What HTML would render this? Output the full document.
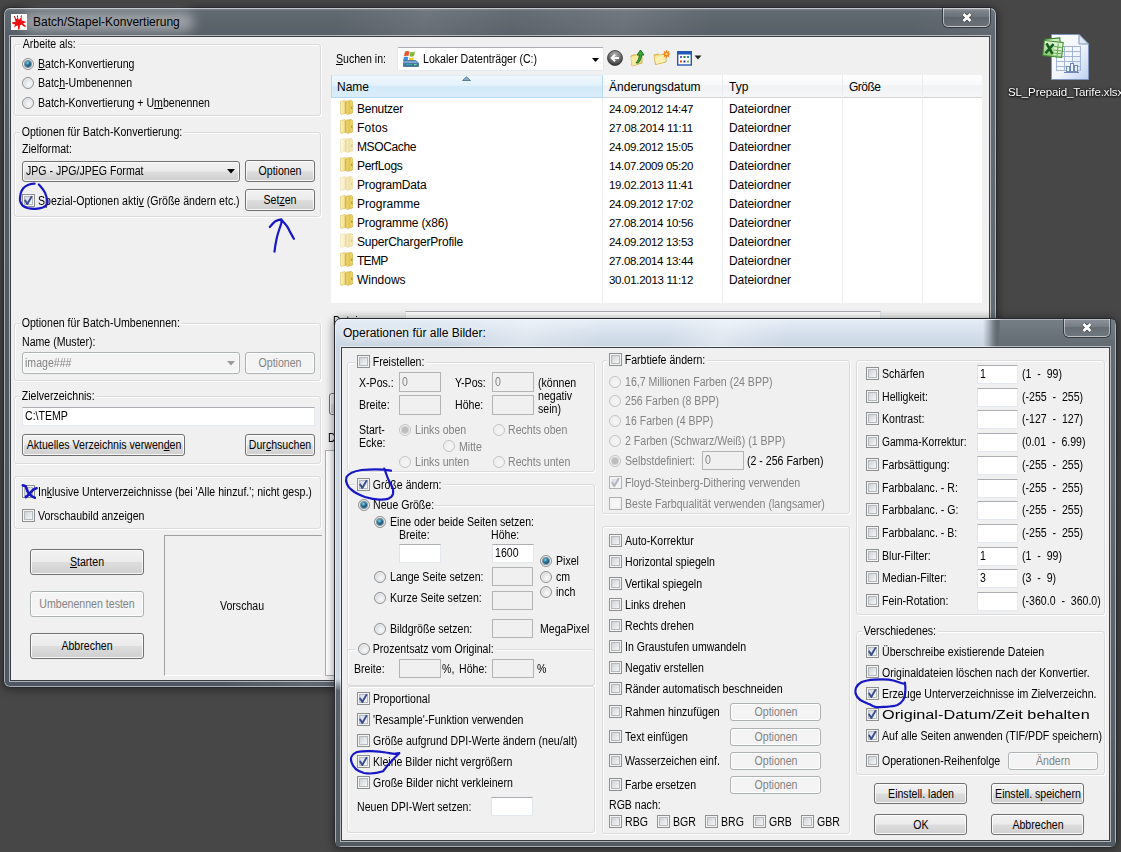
<!DOCTYPE html>
<html lang="de"><head><meta charset="utf-8"><title>Batch/Stapel-Konvertierung</title>
<style>
html,body{margin:0;padding:0}
body{width:1121px;height:852px;overflow:hidden;background:#474747;position:relative;font-family:"Liberation Sans",sans-serif;font-size:12.300px;color:#000}
div,span{box-sizing:border-box}
.a{position:absolute}
.t{position:absolute;white-space:pre;line-height:14px;height:14px;transform-origin:0 50%;transform:scaleX(.86)}
.g{color:#838383}
.s{position:absolute;white-space:nowrap;line-height:16px;height:16px;font-size:12px;letter-spacing:0.1px}
.win{position:absolute;border-radius:7px;border:1px solid #26292d;box-shadow:inset 0 0 0 1px rgba(255,255,255,.5),0 1px 9px 1px rgba(0,0,0,.4)}
.cl{position:absolute;background:#f0f0f0;border:1px solid #3a3f45;box-shadow:0 0 0 1px rgba(255,255,255,.55)}
.gb{position:absolute;border:1px solid #dbdbdb;border-radius:3px;box-shadow:inset 1px 1px 0 #fff,1px 1px 0 #fff}
.gl{position:absolute;background:#f0f0f0;height:14px;line-height:14px;white-space:nowrap;padding:0 2px;transform-origin:0 50%;transform:scaleX(.86)}
.cb{position:absolute;width:13px;height:13px;border:1px solid #8e8f8f;background:#f4f4f4;box-shadow:inset 0 0 0 1px #f4f4f4,inset 0 0 0 2px #b4b9be}
.cb i{position:absolute;left:2px;top:2px;width:7px;height:7px;background:linear-gradient(135deg,#cfd2d6,#f6f6f6)}
.cb.d{border-color:#b1b1b1;background:#f7f7f7;box-shadow:inset 0 0 0 2px #f3f3f3}
.cb.d i{background:#f7f7f7}
.cb.on:after{content:"";position:absolute;left:0;top:0;width:11px;height:11px;background:#3d4f8c;clip-path:polygon(1px 5.600px,2.400px 4.300px,4.300px 7px,8px .800px,9.700px 1.400px,4.900px 9.900px,3.800px 9.900px)}
.cb.on i{background:linear-gradient(135deg,#d5daea,#f4f6fb)}
.cb.d.on:after{background:#b4b4b4}
.rb{position:absolute;width:12px;height:12px;border-radius:50%;border:1px solid #8e8f8f;background:radial-gradient(circle at 60% 60%,#fafafa 0,#e3e5e8 45%,#c3c7cc 100%);box-shadow:inset 0 0 0 1px #f2f2f2}
.rb.d{border-color:#c4c4c4;background:radial-gradient(circle at 60% 60%,#f6f6f6 0,#e9e9e9 100%)}
.rb.on:after{content:"";position:absolute;left:2px;top:2px;width:6px;height:6px;border-radius:50%;background:radial-gradient(circle at 40% 32%,#86d3ee 0,#1f6f92 42%,#0b2f45 100%);box-shadow:0 0 0 1px rgba(50,90,115,.6)}
.rb.d.on:after{background:#bdbdbd;box-shadow:0 0 0 1px #cfcfcf}
.bt{position:absolute;border:1px solid #707070;border-radius:3px;background:linear-gradient(#f2f2f2 0,#ebebeb 48%,#dddddd 52%,#cfcfcf 100%);box-shadow:inset 0 0 0 1px rgba(255,255,255,.85);text-align:center;white-space:nowrap}
.x{position:absolute;left:50%;top:0;transform:translateX(-50%) scaleX(.86)}
.xl{display:inline-block;transform-origin:0 50%;transform:scaleX(.86)}
.bt.d{border-color:#adb2b5;background:#f4f4f4;color:#838383}
.bt.def{border-color:#3c7fb1;box-shadow:inset 0 0 0 1px #46d8fb}
.fd{position:absolute;background:#fff;border:1px solid #e3e9ef;border-top-color:#abadb3;border-left-color:#e2e3ea;white-space:nowrap;padding-left:2px}
.fd.d{background:#f0f0f0;border:1px solid #b4b4b4;color:#838383}
u{text-decoration:underline;text-underline-offset:1px}
</style></head>
<body>
<svg class="a" style="left:1040px;top:32px" width="52" height="50" viewBox="0 0 52 50">
<defs><linearGradient id="pg" x1="0" y1="0" x2="1" y2="1"><stop offset="0" stop-color="#ffffff"/><stop offset=".55" stop-color="#f1f5fd"/><stop offset="1" stop-color="#bccff0"/></linearGradient>
<linearGradient id="xg" x1="0" y1="0" x2="0" y2="1"><stop offset="0" stop-color="#e2f2d6"/><stop offset="1" stop-color="#86c56b"/></linearGradient></defs>
<path d="M11.500 2.500H39l9.500 9.500V47.500H11.500Z" fill="url(#pg)" stroke="#7f95bb"/>
<path d="M39 2.500V12h9.500Z" fill="#dfe8f8" stroke="#7f95bb" stroke-linejoin="round"/>
<g stroke="#a3b5d6" stroke-width="1" fill="none"><path d="M16 14.500H40M16 19.500H40M16 24.500H40M16 29.500H40M16 34.500H40M16 38.500H40M16.500 14V39M24.500 14V39M32.500 14V39M40.500 14V39"/></g>
<g fill="#ecf1fb" stroke="#6f88b5" stroke-width="1"><rect x="26.500" y="34.500" width="3" height="5"/><rect x="30.500" y="31.500" width="3" height="8"/><rect x="34.500" y="33.500" width="3" height="6"/></g><path d="M24 40.500h15" stroke="#6f88b5"/>
<rect x="5.500" y="6.500" width="15" height="15" fill="#cfe8bf" stroke="#2f7d25" transform="rotate(-5 13 14)"/>
<rect x="3.500" y="9.500" width="19" height="15" fill="url(#xg)" stroke="#3a8a2c" transform="rotate(6 13 17)"/>
<g transform="rotate(6 13 17)"><rect x="14" y="11" width="7.500" height="12" fill="#e4f3da" opacity=".9"/><path d="M14 14.500h7.500M14 18h7.500M14 21h7.500M17.700 11v12" stroke="#5aa848" stroke-width="1"/>
<path d="M6 12l7 10M13 12l-7 10" stroke="#145c1c" stroke-width="2.600"/></g>
</svg>
<div class="s" style="left:1008px;top:84px;color:#fff;text-shadow:0 1px 2px #000,0 0 3px #000;font-size:11.500px;letter-spacing:-0.12px;transform:scaleX(1.001);transform-origin:0 0">SL_Prepaid_Tarife.xlsx</div>
<div class="win" style="left:3px;top:7px;width:994px;height:681px;background:linear-gradient(100deg,rgba(255,255,255,0) 30%,rgba(255,255,255,.09) 38%,rgba(255,255,255,.02) 46%,rgba(255,255,255,.1) 56%,rgba(255,255,255,0) 64%,rgba(255,255,255,0) 82%,rgba(255,255,255,.12) 97%),linear-gradient(#8a929a 0,#616971 3px,#565e67 28px,#525b64 300px,#4f5862 100%)"></div>
<div class="a" style="left:22px;top:12px;width:172px;height:20px;border-radius:10px;background:rgba(255,255,255,.4);filter:blur(6px)"></div>
<svg class="a" style="left:11px;top:14px" width="16" height="16" viewBox="0 0 16 16"><rect width="16" height="16" fill="#fff"/>
<path d="M3 2.500L5.500 5L6.800 3.500L8 6L10.500 2.500L10.800 6.500L15.500 8L12 9.500L15.500 12.500L13 12.800L10.500 10.500L9 11.500L8.500 15.500L7 15.500L7 11.500L5 12L3 13.500L4 10.500L1 9.500L1.500 8L4.500 8L4 5.500Z" fill="#f01212"/><path d="M3 2l1.500 1.500M6.500 1.500v2M10.500 1.500l-.500 1.500" stroke="#8a1010" stroke-width="1"/></svg>
<div class="s" style="left:33px;top:14px;letter-spacing:0">Batch/Stapel-Konvertierung</div>
<div class="a" style="left:943px;top:8px;width:47px;height:19px;border:1px solid rgba(255,255,255,.55);border-top:0;border-radius:0 0 5px 5px;background:linear-gradient(rgba(255,255,255,.18),rgba(255,255,255,.04) 50%,rgba(0,0,0,.06) 50%,rgba(255,255,255,.05));box-shadow:0 0 0 1px rgba(30,34,38,.7)"></div>
<svg class="a" style="left:961px;top:12px" width="12" height="11" viewBox="0 0 12 11"><path d="M2.500 1.900L9.500 9.100M9.500 1.900L2.500 9.100" stroke="#3b4046" stroke-width="4.200"/><path d="M2.500 1.900L9.500 9.100M9.500 1.900L2.500 9.100" stroke="#fff" stroke-width="2.800"/></svg>
<div class="cl" style="left:10px;top:36px;width:980px;height:645px"></div>
<div class="gb" style="left:14px;top:44px;width:307px;height:72px"></div>
<div class="gl " style="left:21px;top:37px">Arbeite als:</div>
<div class="rb on" style="left:22px;top:58px"></div>
<div class="t " style="left:38px;top:57px"><u>B</u>atch-Konvertierung</div>
<div class="rb" style="left:22px;top:77px"></div>
<div class="t " style="left:38px;top:76px">Batc<u>h</u>-Umbenennen</div>
<div class="rb" style="left:22px;top:97px"></div>
<div class="t " style="left:38px;top:96px">Batch-Konvertierung + U<u>m</u>benennen</div>
<div class="gb" style="left:14px;top:132px;width:307px;height:85px"></div>
<div class="gl " style="left:20px;top:125px">Optionen für Batch-Konvertierung:</div>
<div class="t " style="left:22px;top:142px">Zielformat:</div>
<div class="bt" style="left:22px;top:161px;width:218px;height:21px;line-height:19px;text-align:left;padding-left:3px"><span class="xl">JPG - JPG/JPEG Format</span></div>
<svg class="a" style="left:227px;top:169px" width="8" height="5"><path d="M0 0h8L4 4.500Z" fill="#000"/></svg>
<div class="bt" style="left:245px;top:160px;width:70px;height:22px;line-height:20px"><span class="x">Optionen</span></div>
<div class="cb on" style="left:22px;top:194px"><i></i></div>
<div class="t " style="left:38px;top:194px">Spezial-Optionen akti<u>v</u> (Größe ändern etc.)</div>
<div class="bt" style="left:245px;top:189px;width:70px;height:22px;line-height:20px"><span class="x">Set<u>z</u>en</span></div>
<div class="gb" style="left:14px;top:323px;width:307px;height:58px"></div>
<div class="gl " style="left:20px;top:316px">Optionen für Batch-Umbenennen:</div>
<div class="t " style="left:22px;top:335px">Name (Muster):</div>
<div class="bt d" style="left:22px;top:352px;width:218px;height:22px;line-height:20px;text-align:left;padding-left:2px"><span class="xl">image###</span></div>
<svg class="a" style="left:227px;top:361px" width="8" height="5"><path d="M0 0h8L4 4.500Z" fill="#9a9a9a"/></svg>
<div class="bt d" style="left:245px;top:352px;width:70px;height:22px;line-height:20px"><span class="x">Optionen</span></div>
<div class="gb" style="left:14px;top:396px;width:307px;height:68px"></div>
<div class="gl " style="left:20px;top:389px">Zielverzeichnis:</div>
<div class="fd" style="left:22px;top:407px;width:293px;height:19px;line-height:17px"><span class="xl">C:\TEMP</span></div>
<div class="bt" style="left:22px;top:434px;width:163px;height:22px;line-height:20px"><span class="x">Aktuelles Verzeichnis verwen<u>d</u>en</span></div>
<div class="bt" style="left:245px;top:434px;width:70px;height:22px;line-height:20px"><span class="x">Dur<u>c</u>hsuchen</span></div>
<div class="gb" style="left:14px;top:476px;width:307px;height:53px"></div>
<div class="cb" style="left:22px;top:485px"><i></i></div>
<div class="t " style="left:38px;top:485px">In<u>k</u>lusive Unterverzeichnisse (bei 'Alle hinzuf.'; nicht gesp.)</div>
<div class="cb" style="left:22px;top:509px"><i></i></div>
<div class="t " style="left:38px;top:509px">Vorschaubild anzei<u>g</u>en</div>
<div class="bt" style="left:30px;top:549px;width:114px;height:26px;line-height:24px"><span class="x"><u>S</u>tarten</span></div>
<div class="bt d" style="left:30px;top:591px;width:114px;height:26px;line-height:24px"><span class="x">Umbenennen testen</span></div>
<div class="bt" style="left:30px;top:633px;width:114px;height:26px;line-height:24px"><span class="x">Abbrechen</span></div>
<div class="a" style="left:164px;top:535px;width:158px;height:141px;border:1px solid #a0a0a0;border-right:0;border-bottom-color:#fff"></div>
<div class="t " style="left:220px;top:599px">Vorschau</div>
<div class="t " style="left:336px;top:52px"><u>S</u>uchen in:</div>
<div class="a" style="left:397px;top:47px;width:207px;height:24px;background:#fff;border:1px solid #e3e9ef;border-top-color:#abadb3;border-radius:2px"></div>
<svg class="a" style="left:403px;top:50px" width="16" height="17" viewBox="0 0 16 17">
<path d="M2 1.500c2-1 3-.5 4.500 0L5.500 6C4 5.500 3 5.500 1 6.300Z" fill="#e8542c"/><path d="M7.500 1.800c1.500.7 3 .6 4.500-.3L11 6c-1.500.9-3 .9-4.500.3Z" fill="#7cb83a"/>
<path d="M.8 7.300c2-.8 3-.6 4.500-.1L4.500 11C3 10.500 2 10.500 0 11.300Z" fill="#3a8edb"/><path d="M6.300 7.500c1.500.6 3 .6 4.500-.3L10 11c-1.500.9-3 .9-4.500.3Z" fill="#f4c430"/>
<path d="M1.500 10.500h11l3 2.500v3.500H.5V13Z" fill="#7aa6d2" stroke="#3c6590" stroke-width=".8"/><rect x="1.200" y="13.300" width="13.600" height="2.600" fill="#2f6a8f"/><rect x="2.500" y="14" width="7" height="1.200" fill="#3f9fb0"/><rect x="11" y="14" width="2.500" height="1.200" fill="#7fe07a"/></svg>
<div class="t " style="left:423px;top:52px">Lokaler Datenträger (C:)</div>
<svg class="a" style="left:592px;top:58px" width="8" height="5"><path d="M0 0h7L3.500 4Z" fill="#000"/></svg>
<svg class="a" style="left:607px;top:50px" width="16" height="16" viewBox="0 0 16 16"><defs><radialGradient id="bk" cx=".5" cy=".3" r=".7"><stop offset="0" stop-color="#b9b9b9"/><stop offset=".6" stop-color="#6b6b6b"/><stop offset="1" stop-color="#2e2e2e"/></radialGradient></defs>
<circle cx="8" cy="8" r="7.500" fill="url(#bk)" stroke="#3a3a3a" stroke-width=".8"/><path d="M12 8H5M8 4.800L4.800 8 8 11.200" stroke="#fff" stroke-width="2" fill="none"/></svg>
<svg class="a" style="left:630px;top:49px" width="17" height="18" viewBox="0 0 17 18"><path d="M1 7l4-1.500 2 1 5-1.500v9l-10 3Z" fill="#f3d873" stroke="#c9a43a" stroke-width=".8"/><path d="M1 8l7-2v9l-6 2Z" fill="#f9e9a0"/>
<path d="M6 14c2-2 3-5 3.500-8H7L10.500 1 14 6h-2.300c-.4 3.500-1.500 6-3.500 8Z" fill="#35a839" stroke="#1a6b22" stroke-width=".9"/></svg>
<svg class="a" style="left:653px;top:50px" width="18" height="16" viewBox="0 0 18 16"><path d="M1 5l4-1 1.500 1.200L13 4v8L2.500 14.500Z" fill="#f3d873" stroke="#c9a43a" stroke-width=".8"/><path d="M1.500 6.500l11-2.200v7.500L3 14Z" fill="#fbeeb0"/>
<circle cx="13.500" cy="4" r="2.600" fill="#f59a23"/><path d="M13.500 .3v7.400M9.800 4h7.400M10.900 1.400l5.200 5.200M16.100 1.400l-5.200 5.200" stroke="#f07c12" stroke-width="1.100"/><circle cx="13.500" cy="4" r="1.300" fill="#ffd27a"/></svg>
<svg class="a" style="left:677px;top:51px" width="26" height="15" viewBox="0 0 26 15"><rect x=".7" y=".7" width="13.600" height="13.300" fill="#fff" stroke="#2458b5" stroke-width="1.400"/><rect x="1" y="1" width="13" height="2.500" fill="#2458b5"/>
<rect x="3" y="5" width="2" height="2" fill="#6a5acd"/><rect x="6.500" y="5" width="2" height="2" fill="#2e7d32"/><rect x="10" y="5" width="2" height="2" fill="#1e88e5"/>
<rect x="3" y="9.500" width="2" height="2" fill="#e65100"/><rect x="6.500" y="9.500" width="2" height="2" fill="#283593"/><rect x="10" y="9.500" width="2" height="2" fill="#7cb342"/>
<path d="M17.500 4.500h7L21 8.500Z" fill="#222"/></svg>
<div class="a" style="left:331px;top:75px;width:651px;height:228px;background:#fff"></div>
<div class="a" style="left:331px;top:75px;width:651px;height:23px;background:linear-gradient(#fff,#f7f8fa 45%,#f1f2f4 50%,#f5f6f8);border-bottom:1px solid #d5d5d5"></div>
<div class="a" style="left:331px;top:75px;width:272px;height:23px;background:linear-gradient(#f1f8fd,#e2f1fb 45%,#d4eaf8 50%,#d9edf9);border:1px solid #b5d9f0;border-top-color:#dbeefa"></div>
<svg class="a" style="left:462px;top:76px" width="9" height="5"><path d="M.5 4.500L4.500 .8 8.500 4.500Z" fill="#8fb0cc" stroke="#4d7396" stroke-width=".9"/></svg>
<div class="a" style="left:722px;top:75px;width:1px;height:228px;background:#ececec"></div>
<div class="a" style="left:842px;top:75px;width:1px;height:228px;background:#ececec"></div>
<div class="a" style="left:922px;top:75px;width:1px;height:228px;background:#ececec"></div>
<div class="a" style="left:602px;top:98px;width:1px;height:205px;background:#ececec"></div>
<div class="s" style="left:337px;top:79px;letter-spacing:-0.004px;">Name</div>
<div class="s" style="left:609px;top:79px;letter-spacing:0.014px;">Änderungsdatum</div>
<div class="s" style="left:729px;top:79px;letter-spacing:0.052px;">Typ</div>
<div class="s" style="left:849px;top:79px;letter-spacing:-0.503px;">Größe</div>
<svg width="0" height="0" style="position:absolute"><defs>
<linearGradient id="fa" x1="0" y1="0" x2="1" y2="0"><stop offset="0" stop-color="#f4e08a"/><stop offset=".5" stop-color="#e3c34f"/><stop offset="1" stop-color="#f1da7c"/></linearGradient>
<linearGradient id="fb" x1="0" y1="0" x2="1" y2="0"><stop offset="0" stop-color="#fbf3c4"/><stop offset="1" stop-color="#efd977"/></linearGradient>
</defs></svg>
<svg class="a" style="left:340px;top:100px" width="13" height="16"><g><path d="M.5 1.500L5 .5 6 1.500V13L1 14.500.5 14Z" fill="url(#fb)" stroke="#d9bd56" stroke-width=".6"/><path d="M6 1.200L11.500 .5 12.500 1.500V13L7 14.500 6 13.500Z" fill="url(#fa)" stroke="#caa93d" stroke-width=".6"/><path d="M5.500 2V13.500" stroke="#cdb040" stroke-width="1.400" opacity=".7"/><path d="M11.800 6.500v2.500" stroke="#a98a2c" stroke-width="1"/></g></svg>
<div class="s" style="left:357px;top:101px;letter-spacing:-0.254px;">Benutzer</div>
<div class="s" style="left:609px;top:101px;letter-spacing:-0.346px;font-size:11.5px;">24.09.2012 14:47</div>
<div class="s" style="left:729px;top:101px;letter-spacing:-0.064px;">Dateiordner</div>
<svg class="a" style="left:340px;top:119px" width="13" height="16"><g><path d="M.5 1.500L5 .5 6 1.500V13L1 14.500.5 14Z" fill="url(#fb)" stroke="#d9bd56" stroke-width=".6"/><path d="M6 1.200L11.500 .5 12.500 1.500V13L7 14.500 6 13.500Z" fill="url(#fa)" stroke="#caa93d" stroke-width=".6"/><path d="M5.500 2V13.500" stroke="#cdb040" stroke-width="1.400" opacity=".7"/><path d="M11.800 6.500v2.500" stroke="#a98a2c" stroke-width="1"/></g></svg>
<div class="s" style="left:357px;top:120px;letter-spacing:0.197px;">Fotos</div>
<div class="s" style="left:609px;top:120px;letter-spacing:-0.239px;font-size:11.5px;">27.08.2014 11:11</div>
<div class="s" style="left:729px;top:120px;letter-spacing:-0.064px;">Dateiordner</div>
<svg class="a" style="left:340px;top:138px" width="13" height="16"><g opacity=".5"><path d="M.5 1.500L5 .5 6 1.500V13L1 14.500.5 14Z" fill="url(#fb)" stroke="#d9bd56" stroke-width=".6"/><path d="M6 1.200L11.500 .5 12.500 1.500V13L7 14.500 6 13.500Z" fill="url(#fa)" stroke="#caa93d" stroke-width=".6"/><path d="M5.500 2V13.500" stroke="#cdb040" stroke-width="1.400" opacity=".7"/><path d="M11.800 6.500v2.500" stroke="#a98a2c" stroke-width="1"/></g></svg>
<div class="s" style="left:357px;top:139px;letter-spacing:-0.379px;">MSOCache</div>
<div class="s" style="left:609px;top:139px;letter-spacing:-0.346px;font-size:11.5px;">24.09.2012 15:05</div>
<div class="s" style="left:729px;top:139px;letter-spacing:-0.064px;">Dateiordner</div>
<svg class="a" style="left:340px;top:157px" width="13" height="16"><g><path d="M.5 1.500L5 .5 6 1.500V13L1 14.500.5 14Z" fill="url(#fb)" stroke="#d9bd56" stroke-width=".6"/><path d="M6 1.200L11.500 .5 12.500 1.500V13L7 14.500 6 13.500Z" fill="url(#fa)" stroke="#caa93d" stroke-width=".6"/><path d="M5.500 2V13.500" stroke="#cdb040" stroke-width="1.400" opacity=".7"/><path d="M11.800 6.500v2.500" stroke="#a98a2c" stroke-width="1"/></g></svg>
<div class="s" style="left:357px;top:158px;letter-spacing:-0.316px;">PerfLogs</div>
<div class="s" style="left:609px;top:158px;letter-spacing:-0.346px;font-size:11.5px;">14.07.2009 05:20</div>
<div class="s" style="left:729px;top:158px;letter-spacing:-0.064px;">Dateiordner</div>
<svg class="a" style="left:340px;top:176px" width="13" height="16"><g opacity=".5"><path d="M.5 1.500L5 .5 6 1.500V13L1 14.500.5 14Z" fill="url(#fb)" stroke="#d9bd56" stroke-width=".6"/><path d="M6 1.200L11.500 .5 12.500 1.500V13L7 14.500 6 13.500Z" fill="url(#fa)" stroke="#caa93d" stroke-width=".6"/><path d="M5.500 2V13.500" stroke="#cdb040" stroke-width="1.400" opacity=".7"/><path d="M11.800 6.500v2.500" stroke="#a98a2c" stroke-width="1"/></g></svg>
<div class="s" style="left:357px;top:177px;letter-spacing:-0.17px;">ProgramData</div>
<div class="s" style="left:609px;top:177px;letter-spacing:-0.293px;font-size:11.5px;">19.02.2013 11:41</div>
<div class="s" style="left:729px;top:177px;letter-spacing:-0.064px;">Dateiordner</div>
<svg class="a" style="left:340px;top:195px" width="13" height="16"><g><path d="M.5 1.500L5 .5 6 1.500V13L1 14.500.5 14Z" fill="url(#fb)" stroke="#d9bd56" stroke-width=".6"/><path d="M6 1.200L11.500 .5 12.500 1.500V13L7 14.500 6 13.500Z" fill="url(#fa)" stroke="#caa93d" stroke-width=".6"/><path d="M5.500 2V13.500" stroke="#cdb040" stroke-width="1.400" opacity=".7"/><path d="M11.800 6.500v2.500" stroke="#a98a2c" stroke-width="1"/></g></svg>
<div class="s" style="left:357px;top:196px;letter-spacing:0.035px;">Programme</div>
<div class="s" style="left:609px;top:196px;letter-spacing:-0.346px;font-size:11.5px;">24.09.2012 17:02</div>
<div class="s" style="left:729px;top:196px;letter-spacing:-0.064px;">Dateiordner</div>
<svg class="a" style="left:340px;top:214px" width="13" height="16"><g><path d="M.5 1.500L5 .5 6 1.500V13L1 14.500.5 14Z" fill="url(#fb)" stroke="#d9bd56" stroke-width=".6"/><path d="M6 1.200L11.500 .5 12.500 1.500V13L7 14.500 6 13.500Z" fill="url(#fa)" stroke="#caa93d" stroke-width=".6"/><path d="M5.500 2V13.500" stroke="#cdb040" stroke-width="1.400" opacity=".7"/><path d="M11.800 6.500v2.500" stroke="#a98a2c" stroke-width="1"/></g></svg>
<div class="s" style="left:357px;top:215px;letter-spacing:-0.157px;">Programme (x86)</div>
<div class="s" style="left:609px;top:215px;letter-spacing:-0.346px;font-size:11.5px;">27.08.2014 10:56</div>
<div class="s" style="left:729px;top:215px;letter-spacing:-0.064px;">Dateiordner</div>
<svg class="a" style="left:340px;top:233px" width="13" height="16"><g opacity=".5"><path d="M.5 1.500L5 .5 6 1.500V13L1 14.500.5 14Z" fill="url(#fb)" stroke="#d9bd56" stroke-width=".6"/><path d="M6 1.200L11.500 .5 12.500 1.500V13L7 14.500 6 13.500Z" fill="url(#fa)" stroke="#caa93d" stroke-width=".6"/><path d="M5.500 2V13.500" stroke="#cdb040" stroke-width="1.400" opacity=".7"/><path d="M11.800 6.500v2.500" stroke="#a98a2c" stroke-width="1"/></g></svg>
<div class="s" style="left:357px;top:234px;letter-spacing:-0.178px;">SuperChargerProfile</div>
<div class="s" style="left:609px;top:234px;letter-spacing:-0.346px;font-size:11.5px;">24.09.2012 13:53</div>
<div class="s" style="left:729px;top:234px;letter-spacing:-0.064px;">Dateiordner</div>
<svg class="a" style="left:340px;top:252px" width="13" height="16"><g><path d="M.5 1.500L5 .5 6 1.500V13L1 14.500.5 14Z" fill="url(#fb)" stroke="#d9bd56" stroke-width=".6"/><path d="M6 1.200L11.500 .5 12.500 1.500V13L7 14.500 6 13.500Z" fill="url(#fa)" stroke="#caa93d" stroke-width=".6"/><path d="M5.500 2V13.500" stroke="#cdb040" stroke-width="1.400" opacity=".7"/><path d="M11.800 6.500v2.500" stroke="#a98a2c" stroke-width="1"/></g></svg>
<div class="s" style="left:357px;top:253px;letter-spacing:-0.711px;">TEMP</div>
<div class="s" style="left:609px;top:253px;letter-spacing:-0.346px;font-size:11.5px;">27.08.2014 13:44</div>
<div class="s" style="left:729px;top:253px;letter-spacing:-0.064px;">Dateiordner</div>
<svg class="a" style="left:340px;top:271px" width="13" height="16"><g><path d="M.5 1.500L5 .5 6 1.500V13L1 14.500.5 14Z" fill="url(#fb)" stroke="#d9bd56" stroke-width=".6"/><path d="M6 1.200L11.500 .5 12.500 1.500V13L7 14.500 6 13.500Z" fill="url(#fa)" stroke="#caa93d" stroke-width=".6"/><path d="M5.500 2V13.500" stroke="#cdb040" stroke-width="1.400" opacity=".7"/><path d="M11.800 6.500v2.500" stroke="#a98a2c" stroke-width="1"/></g></svg>
<div class="s" style="left:357px;top:272px;letter-spacing:-0.027px;">Windows</div>
<div class="s" style="left:609px;top:272px;letter-spacing:-0.293px;font-size:11.5px;">30.01.2013 11:12</div>
<div class="s" style="left:729px;top:272px;letter-spacing:-0.064px;">Dateiordner</div>
<div class="t " style="left:333px;top:314px">Dateiname:</div>
<div class="a" style="left:405px;top:311px;width:476px;height:20px;background:#fff;border:1px solid #e3e9ef;border-top-color:#abadb3"></div>
<div class="bt" style="left:329px;top:393px;width:40px;height:22px"></div>
<div class="t " style="left:328px;top:431px">Dateien:</div>
<div class="a" style="left:325px;top:450px;width:60px;height:226px;background:#fff;border:1px solid #abadb3"></div>
<div class="win" style="left:334px;top:318px;width:783px;height:530px;background:linear-gradient(90deg,rgba(0,0,0,0) 0,rgba(0,0,0,0) 655px,#5f676f 668px,#5a626a 100%),linear-gradient(#e6eef7 0,#d6e0ec 14px,#cad6e3 27px,#cdd7e2 360px,#5b636b 372px,#525a62 100%)"></div>
<div class="a" style="left:997px;top:320px;width:118px;height:27px;background:linear-gradient(#757d85,#626a72)"></div>
<div class="a" style="left:983px;top:320px;width:17px;height:27px;background:linear-gradient(90deg,rgba(105,112,120,0),#5f676f 85%,#697078)"></div>
<div class="a" style="left:336px;top:690px;width:779px;height:156px;background:linear-gradient(#59616a,#515961)"></div>
<div class="a" style="left:1100px;top:340px;width:15px;height:400px;background:linear-gradient(#646c74,#59616a)"></div>
<div class="a" style="left:336px;top:320px;width:640px;height:27px;background:linear-gradient(115deg,rgba(255,255,255,0) 20%,rgba(255,255,255,.3) 30%,rgba(255,255,255,0) 42%,rgba(255,255,255,0) 52%,rgba(255,255,255,.35) 60%,rgba(255,255,255,0) 70%)"></div>
<div class="s" style="left:343px;top:325px;letter-spacing:0;text-shadow:0 0 6px #fff,0 0 10px #fff">Operationen für alle Bilder:</div>
<div class="a" style="left:1064px;top:319px;width:46px;height:18px;border:1px solid rgba(255,255,255,.5);border-top:0;border-radius:0 0 5px 5px;background:linear-gradient(rgba(255,255,255,.16),rgba(255,255,255,.04) 50%,rgba(0,0,0,.08) 50%,rgba(255,255,255,.04));box-shadow:0 0 0 1px rgba(30,34,38,.7)"></div>
<svg class="a" style="left:1081px;top:322px" width="12" height="11" viewBox="0 0 12 11"><path d="M2.500 1.900L9.500 9.100M9.500 1.900L2.500 9.100" stroke="#3b4046" stroke-width="4.200"/><path d="M2.500 1.900L9.500 9.100M9.500 1.900L2.500 9.100" stroke="#fff" stroke-width="2.800"/></svg>
<div class="cl" style="left:341px;top:347px;width:769px;height:494px"></div>
<div class="gb" style="left:347px;top:362px;width:248px;height:110px"></div>
<div class="cb" style="left:357px;top:355px"><i></i></div>
<div class="gl" style="left:371px;top:355px">Freistellen:</div>
<div class="a" style="left:355px;top:356px;width:17px;height:13px;background:#f0f0f0"></div>
<div class="cb" style="left:357px;top:355px"><i></i></div>
<div class="t " style="left:359px;top:376px">X-Pos.:</div>
<div class="fd d" style="left:399px;top:372px;width:42px;height:20px;line-height:18px"><span class="xl">0</span></div>
<div class="t " style="left:455px;top:376px">Y-Pos:</div>
<div class="fd d" style="left:492px;top:372px;width:42px;height:20px;line-height:18px"><span class="xl">0</span></div>
<div class="t " style="left:538px;top:376px">(können</div>
<div class="t " style="left:538px;top:389px">negativ</div>
<div class="t " style="left:538px;top:402px">sein)</div>
<div class="t " style="left:359px;top:398px">Breite:</div>
<div class="fd d" style="left:399px;top:395px;width:42px;height:20px;line-height:18px"></div>
<div class="t " style="left:455px;top:398px">Höhe:</div>
<div class="fd d" style="left:492px;top:395px;width:42px;height:20px;line-height:18px"></div>
<div class="t " style="left:359px;top:423px">Start-</div>
<div class="t " style="left:359px;top:436px">Ecke:</div>
<div class="rb on d" style="left:399px;top:424px"></div>
<div class="t g" style="left:415px;top:423px">Links oben</div>
<div class="rb d" style="left:493px;top:424px"></div>
<div class="t g" style="left:508px;top:423px">Rechts oben</div>
<div class="rb d" style="left:443px;top:440px"></div>
<div class="t g" style="left:459px;top:440px">Mitte</div>
<div class="rb d" style="left:399px;top:456px"></div>
<div class="t g" style="left:415px;top:455px">Links unten</div>
<div class="rb d" style="left:493px;top:456px"></div>
<div class="t g" style="left:508px;top:455px">Rechts unten</div>
<div class="gb" style="left:347px;top:484px;width:248px;height:202px"></div>
<div class="a" style="left:355px;top:478px;width:17px;height:13px;background:#f0f0f0"></div>
<div class="cb on" style="left:357px;top:478px"><i></i></div>
<div class="gl" style="left:371px;top:478px">Größe ändern:</div>
<div class="a" style="left:434px;top:505px;width:160px;height:2px;background:#d9d9d9;border-bottom:1px solid #fff"></div>
<div class="rb on" style="left:358px;top:499px"></div>
<div class="t " style="left:373px;top:498px">Neue Größe:</div>
<div class="rb on" style="left:374px;top:516px"></div>
<div class="t " style="left:390px;top:515px">Eine oder beide Seiten setzen:</div>
<div class="t " style="left:399px;top:528px">Breite:</div>
<div class="t " style="left:491px;top:528px">Höhe:</div>
<div class="fd" style="left:399px;top:544px;width:42px;height:19px;line-height:17px"></div>
<div class="fd" style="left:492px;top:544px;width:42px;height:19px;line-height:17px"><span class="xl">1600</span></div>
<div class="rb on" style="left:540px;top:555px"></div>
<div class="t " style="left:556px;top:554px">Pixel</div>
<div class="rb" style="left:540px;top:571px"></div>
<div class="t " style="left:556px;top:570px">cm</div>
<div class="rb" style="left:540px;top:586px"></div>
<div class="t " style="left:556px;top:585px">inch</div>
<div class="rb" style="left:374px;top:571px"></div>
<div class="t " style="left:390px;top:570px">Lange Seite setzen:</div>
<div class="fd d" style="left:492px;top:567px;width:41px;height:19px;line-height:17px"></div>
<div class="rb" style="left:374px;top:592px"></div>
<div class="t " style="left:390px;top:591px">Kurze Seite setzen:</div>
<div class="fd d" style="left:492px;top:591px;width:41px;height:19px;line-height:17px"></div>
<div class="rb" style="left:374px;top:623px"></div>
<div class="t " style="left:390px;top:622px">Bildgröße setzen:</div>
<div class="fd d" style="left:492px;top:619px;width:41px;height:19px;line-height:17px"></div>
<div class="t " style="left:540px;top:622px">MegaPixel</div>
<div class="gb" style="left:347px;top:649px;width:248px;height:37px"></div>
<div class="a" style="left:355px;top:642px;width:17px;height:14px;background:#f0f0f0"></div>
<div class="rb" style="left:358px;top:643px"></div>
<div class="gl" style="left:371px;top:642px">Prozentsatz vom Original:</div>
<div class="t " style="left:354px;top:662px">Breite:</div>
<div class="fd d" style="left:399px;top:659px;width:42px;height:19px;line-height:17px"></div>
<div class="t " style="left:442px;top:662px">%,</div>
<div class="t " style="left:459px;top:662px">Höhe:</div>
<div class="fd d" style="left:492px;top:659px;width:42px;height:19px;line-height:17px"></div>
<div class="t " style="left:537px;top:662px">%</div>
<div class="gb" style="left:347px;top:686px;width:248px;height:147px"></div>
<div class="cb on" style="left:357px;top:692px"><i></i></div>
<div class="t " style="left:373px;top:692px">Proportional</div>
<div class="cb on" style="left:357px;top:713px"><i></i></div>
<div class="t " style="left:373px;top:713px">'Resample'-Funktion verwenden</div>
<div class="cb" style="left:357px;top:734px"><i></i></div>
<div class="t " style="left:373px;top:734px">Größe aufgrund DPI-Werte ändern (neu/alt)</div>
<div class="cb on" style="left:357px;top:755px"><i></i></div>
<div class="t " style="left:373px;top:755px">Kleine Bilder nicht vergrößern</div>
<div class="cb" style="left:357px;top:776px"><i></i></div>
<div class="t " style="left:373px;top:776px">Große Bilder nicht verkleinern</div>
<div class="t " style="left:357px;top:800px">Neuen DPI-Wert setzen:</div>
<div class="fd" style="left:491px;top:797px;width:42px;height:19px;line-height:17px"></div>
<div class="gb" style="left:602px;top:360px;width:248px;height:154px"></div>
<div class="a" style="left:607px;top:354px;width:17px;height:13px;background:#f0f0f0"></div>
<div class="cb" style="left:609px;top:353px"><i></i></div>
<div class="gl" style="left:623px;top:353px">Farbtiefe ändern:</div>
<div class="rb d" style="left:609px;top:376px"></div>
<div class="t g" style="left:625px;top:375px">16,7 Millionen Farben (24 BPP)</div>
<div class="rb d" style="left:609px;top:395px"></div>
<div class="t g" style="left:625px;top:394px">256 Farben (8 BPP)</div>
<div class="rb d" style="left:609px;top:415px"></div>
<div class="t g" style="left:625px;top:414px">16 Farben (4 BPP)</div>
<div class="rb d" style="left:609px;top:435px"></div>
<div class="t g" style="left:625px;top:434px">2 Farben (Schwarz/Weiß) (1 BPP)</div>
<div class="rb on d" style="left:609px;top:455px"></div>
<div class="t g" style="left:625px;top:454px">Selbstdefiniert:</div>
<div class="fd d" style="left:702px;top:451px;width:42px;height:19px;line-height:17px"><span class="xl">0</span></div>
<div class="t " style="left:747px;top:454px">(2 - 256 Farben)</div>
<div class="cb on d" style="left:609px;top:476px"><i></i></div>
<div class="t g" style="left:625px;top:476px">Floyd-Steinberg-Dithering verwenden</div>
<div class="cb d" style="left:609px;top:497px"><i></i></div>
<div class="t g" style="left:625px;top:497px">Beste Farbqualität verwenden (langsamer)</div>
<div class="gb" style="left:602px;top:526px;width:248px;height:308px"></div>
<div class="cb" style="left:609px;top:534px"><i></i></div>
<div class="t " style="left:625px;top:534px">Auto-Korrektur</div>
<div class="cb" style="left:609px;top:555px"><i></i></div>
<div class="t " style="left:625px;top:555px">Horizontal spiegeln</div>
<div class="cb" style="left:609px;top:577px"><i></i></div>
<div class="t " style="left:625px;top:577px">Vertikal spiegeln</div>
<div class="cb" style="left:609px;top:598px"><i></i></div>
<div class="t " style="left:625px;top:598px">Links drehen</div>
<div class="cb" style="left:609px;top:619px"><i></i></div>
<div class="t " style="left:625px;top:619px">Rechts drehen</div>
<div class="cb" style="left:609px;top:640px"><i></i></div>
<div class="t " style="left:625px;top:640px">In Graustufen umwandeln</div>
<div class="cb" style="left:609px;top:661px"><i></i></div>
<div class="t " style="left:625px;top:661px">Negativ erstellen</div>
<div class="cb" style="left:609px;top:682px"><i></i></div>
<div class="t " style="left:625px;top:682px">Ränder automatisch beschneiden</div>
<div class="cb" style="left:609px;top:705px"><i></i></div>
<div class="t " style="left:625px;top:705px">Rahmen hinzufügen</div>
<div class="bt d" style="left:730px;top:703px;width:91px;height:18px;line-height:16px"><span class="x">Optionen</span></div>
<div class="cb" style="left:609px;top:730px"><i></i></div>
<div class="t " style="left:625px;top:730px">Text einfügen</div>
<div class="bt d" style="left:730px;top:728px;width:91px;height:18px;line-height:16px"><span class="x">Optionen</span></div>
<div class="cb" style="left:609px;top:754px"><i></i></div>
<div class="t " style="left:625px;top:754px">Wasserzeichen einf.</div>
<div class="bt d" style="left:730px;top:752px;width:91px;height:18px;line-height:16px"><span class="x">Optionen</span></div>
<div class="cb" style="left:609px;top:778px"><i></i></div>
<div class="t " style="left:625px;top:778px">Farbe ersetzen</div>
<div class="bt d" style="left:730px;top:776px;width:91px;height:18px;line-height:16px"><span class="x">Optionen</span></div>
<div class="t " style="left:609px;top:798px">RGB nach:</div>
<div class="cb" style="left:609px;top:815px"><i></i></div>
<div class="t " style="left:625px;top:815px">RBG</div>
<div class="cb" style="left:657px;top:815px"><i></i></div>
<div class="t " style="left:673px;top:815px">BGR</div>
<div class="cb" style="left:705px;top:815px"><i></i></div>
<div class="t " style="left:721px;top:815px">BRG</div>
<div class="cb" style="left:753px;top:815px"><i></i></div>
<div class="t " style="left:769px;top:815px">GRB</div>
<div class="cb" style="left:801px;top:815px"><i></i></div>
<div class="t " style="left:817px;top:815px">GBR</div>
<div class="gb" style="left:856px;top:360px;width:249px;height:255px"></div>
<div class="cb" style="left:866px;top:367px"><i></i></div>
<div class="t " style="left:882px;top:367px">Schärfen</div>
<div class="fd" style="left:977px;top:365px;width:41px;height:19px;line-height:17px"><span class="xl">1</span></div>
<div class="t " style="left:1022px;top:367px">(1  -  99)</div>
<div class="cb" style="left:866px;top:390px"><i></i></div>
<div class="t " style="left:882px;top:390px">Helligkeit:</div>
<div class="fd" style="left:977px;top:388px;width:41px;height:19px;line-height:17px"></div>
<div class="t " style="left:1022px;top:390px">(-255  -  255)</div>
<div class="cb" style="left:866px;top:412px"><i></i></div>
<div class="t " style="left:882px;top:412px">Kontrast:</div>
<div class="fd" style="left:977px;top:410px;width:41px;height:19px;line-height:17px"></div>
<div class="t " style="left:1022px;top:412px">(-127  -  127)</div>
<div class="cb" style="left:866px;top:435px"><i></i></div>
<div class="t " style="left:882px;top:435px;transform:scaleX(0.83)">Gamma-Korrektur:</div>
<div class="fd" style="left:977px;top:433px;width:41px;height:19px;line-height:17px"></div>
<div class="t " style="left:1022px;top:435px">(0.01  -  6.99)</div>
<div class="cb" style="left:866px;top:458px"><i></i></div>
<div class="t " style="left:882px;top:458px">Farbsättigung:</div>
<div class="fd" style="left:977px;top:456px;width:41px;height:19px;line-height:17px"></div>
<div class="t " style="left:1022px;top:458px">(-255  -  255)</div>
<div class="cb" style="left:866px;top:481px"><i></i></div>
<div class="t " style="left:882px;top:481px">Farbbalanc. - R:</div>
<div class="fd" style="left:977px;top:479px;width:41px;height:19px;line-height:17px"></div>
<div class="t " style="left:1022px;top:481px">(-255  -  255)</div>
<div class="cb" style="left:866px;top:503px"><i></i></div>
<div class="t " style="left:882px;top:503px">Farbbalanc. - G:</div>
<div class="fd" style="left:977px;top:501px;width:41px;height:19px;line-height:17px"></div>
<div class="t " style="left:1022px;top:503px">(-255  -  255)</div>
<div class="cb" style="left:866px;top:526px"><i></i></div>
<div class="t " style="left:882px;top:526px">Farbbalanc. - B:</div>
<div class="fd" style="left:977px;top:524px;width:41px;height:19px;line-height:17px"></div>
<div class="t " style="left:1022px;top:526px">(-255  -  255)</div>
<div class="cb" style="left:866px;top:549px"><i></i></div>
<div class="t " style="left:882px;top:549px">Blur-Filter:</div>
<div class="fd" style="left:977px;top:547px;width:41px;height:19px;line-height:17px"><span class="xl">1</span></div>
<div class="t " style="left:1022px;top:549px">(1  -  99)</div>
<div class="cb" style="left:866px;top:571px"><i></i></div>
<div class="t " style="left:882px;top:571px">Median-Filter:</div>
<div class="fd" style="left:977px;top:569px;width:41px;height:19px;line-height:17px"><span class="xl">3</span></div>
<div class="t " style="left:1022px;top:571px">(3  -  9)</div>
<div class="cb" style="left:866px;top:594px"><i></i></div>
<div class="t " style="left:882px;top:594px">Fein-Rotation:</div>
<div class="fd" style="left:977px;top:592px;width:41px;height:19px;line-height:17px"></div>
<div class="t " style="left:1022px;top:594px">(-360.0  -  360.0)</div>
<div class="gb" style="left:856px;top:631px;width:249px;height:144px"></div>
<div class="gl " style="left:862px;top:624px">Verschiedenes:</div>
<div class="cb on" style="left:866px;top:645px"><i></i></div>
<div class="t " style="left:882px;top:645px">Überschreibe existierende Dateien</div>
<div class="cb" style="left:866px;top:665px"><i></i></div>
<div class="t " style="left:882px;top:666px;transform:scaleX(0.8583)">Originaldateien löschen nach der Konvertier.</div>
<div class="cb on" style="left:866px;top:687px"><i></i></div>
<div class="t " style="left:882px;top:687px">Erzeuge Unterverzeichnisse im Zielverzeichn.</div>
<div class="cb on" style="left:866px;top:708px"><i></i></div>
<div class="t " style="left:882px;top:708px;transform:scaleX(1.3212)">Original-Datum/Zeit behalten</div>
<div class="cb on" style="left:866px;top:729px"><i></i></div>
<div class="t " style="left:882px;top:729px;transform:scaleX(0.8652)">Auf alle Seiten anwenden (TIF/PDF speichern)</div>
<div class="cb" style="left:866px;top:754px"><i></i></div>
<div class="t " style="left:882px;top:754px">Operationen-Reihenfolge</div>
<div class="bt d" style="left:1008px;top:752px;width:90px;height:18px;line-height:16px"><span class="x">Ändern</span></div>
<div class="bt" style="left:874px;top:783px;width:93px;height:21px;line-height:20px"><span class="x">Einstell. laden</span></div>
<div class="bt" style="left:991px;top:783px;width:93px;height:21px;line-height:20px"><span class="x">Einstell. speichern</span></div>
<div class="bt" style="left:874px;top:814px;width:93px;height:21px;line-height:20px"><span class="x">OK</span></div>
<div class="bt" style="left:991px;top:814px;width:93px;height:21px;line-height:20px"><span class="x">Abbrechen</span></div>
<svg class="a" style="left:0;top:0;pointer-events:none" width="1121" height="852" viewBox="0 0 1121 852" fill="none" stroke="#1717c6" stroke-width="2.200" stroke-linecap="round" stroke-linejoin="round">
<path d="M34.600 183.700C32.500 183.800 30.500 184.200 28.500 184.800C26.500 185.600 25 186.500 23.700 187.700C22.300 189.300 21.400 191 20.800 193C20.200 195.500 19.900 198 20 200.400C20.200 202.300 20.900 203.800 22.200 205.100C23.600 206.400 25.300 207.400 27.400 208C30 208.600 32.700 208.900 35.400 208.800C38 208.700 40.500 208.300 42.800 207.500C44.700 206.700 46.100 205.700 47 204.300C47.600 203.200 47.700 202.100 47.500 200.900C46.900 198 46 195.200 44.900 192.400C43.900 190.500 42.700 188.800 41.200 187.200C40.400 186.200 39.600 185.300 38.800 184.500"/>
<path d="M274.500 251.700C275 247 275.700 243 276.500 239.300C277.200 236 278 233 278.900 230.500C279.800 228 280.600 225.700 281.200 223.500C281.500 222 281.600 220.700 281.500 219.400M269.800 227C271.500 225 273.300 223 275.400 221.200C277.300 220.300 279.400 219.800 281.500 219.400M282 220.500C283.800 222.300 285.500 224.300 287.100 226.400C288.400 228.500 289.500 230.700 290.600 232.900C291.700 234.900 292.800 236.900 293.900 238.800"/>
<path stroke-width="2.600" d="M22.800 485.400C24 485.500 25 485.800 25.700 486.300C26.500 488.500 27.200 490.500 28.100 492.400C29.200 493.800 30.400 495 31.600 496C32.700 496.700 33.800 497.300 34.800 497.700M36.600 488.300C35.500 488.500 34.400 488.900 33.400 489.500C32 490.800 30.900 492.200 29.800 493.600C28.500 494.900 27.100 496.100 25.700 497.100"/>
<path d="M391 470.700C385 469.500 372 469 361.500 470C355 471 349 473 346.500 477C345.500 480 346 482 347 484C348 487 350 489 353 491C357 494 361 495.500 365 497C370 498.500 375 499.500 379.500 499.600C383 499.700 386 499.500 388.600 498.600C391 497.500 392.500 496 393 494C393.300 492 393.200 490 392.900 488.600C392 486 390.500 484 389.300 481.400C388 479 387 476.500 386.400 474.300C385.500 472 385 470 384.300 468.600"/>
<path d="M399.300 753.200C395 755 390 753 386 752.500C378 751 364 750.500 357 752C352 754 350 758 351.500 762C353 768 358 771.500 364 773C370 774 378 773 383 771.300C387 766 392 760 399.300 753.200L395.500 753.500"/>
<path d="M904.900 682.500C905.400 686 905.600 689 905.300 691.400C905 695 904.500 698 903.100 700C901.500 702.500 900 704 897.400 705C894 706.200 890 706.600 886 706.800C882 707 879 707.300 876 707.100C873.500 706.500 871.500 705.500 869.600 704.300C866.500 703 863 701.800 860.300 700C858 698.300 856.300 696 855.600 693.600C855.200 691.500 855.300 689.500 856 687.900C857 685.500 859 683.500 861.700 682.100C865.500 680.500 870 679.900 874.600 679.600C879.500 679.300 884 679.200 888.900 679.600C892 680 895 680.800 897.400 681.800C900 682.700 902.500 683.400 905 684"/>
</svg>
</body></html>
